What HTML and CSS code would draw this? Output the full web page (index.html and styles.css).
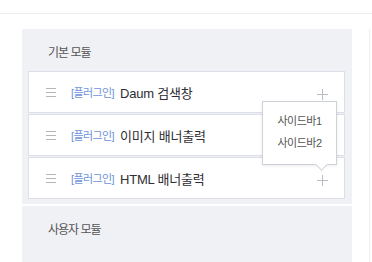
FILE: index.html
```html
<!DOCTYPE html>
<html>
  <head>
    <meta charset="utf-8">
    <title>사이드바 모듈</title>
    <link rel="stylesheet" href="styles.css">
  </head>
  <body>
    <header class="topbar"></header>
    <div class="layout">
      <section class="modules">
        <div class="group">
          <h2 class="group-title">기본 모듈</h2>
          <ul class="module-list">
            <li class="module">
              <svg class="handle" width="10" height="9" viewBox="0 0 10 9"><path d="M0 .5h10M0 4.5h10M0 8.5h10" stroke="#b4b6bb" stroke-width="1"/></svg>
              <span class="tag">[플러그인]</span>
              <span class="name">Daum 검색창</span>
              <svg class="add" width="11" height="11" viewBox="0 0 11 11"><path d="M5.5 0v11M0 5.5h11" stroke="#b9bcc2" stroke-width="1"/></svg>
            </li>
            <li class="module">
              <svg class="handle" width="10" height="9" viewBox="0 0 10 9"><path d="M0 .5h10M0 4.5h10M0 8.5h10" stroke="#b4b6bb" stroke-width="1"/></svg>
              <span class="tag">[플러그인]</span>
              <span class="name">이미지 배너출력</span>
              <svg class="add" width="11" height="11" viewBox="0 0 11 11"><path d="M5.5 0v11M0 5.5h11" stroke="#b9bcc2" stroke-width="1"/></svg>
            </li>
            <li class="module">
              <svg class="handle" width="10" height="9" viewBox="0 0 10 9"><path d="M0 .5h10M0 4.5h10M0 8.5h10" stroke="#b4b6bb" stroke-width="1"/></svg>
              <span class="tag">[플러그인]</span>
              <span class="name">HTML 배너출력</span>
              <svg class="add" width="11" height="11" viewBox="0 0 11 11"><path d="M5.5 0v11M0 5.5h11" stroke="#b9bcc2" stroke-width="1"/></svg>
              <ul class="popup">
                <li>사이드바1</li>
                <li>사이드바2</li>
              </ul>
            </li>
          </ul>
        </div>
        <div class="group group-user">
          <h2 class="group-title">사용자 모듈</h2>
        </div>
      </section>
      <aside class="side"></aside>
    </div>
  </body>
</html>
```
FILE: styles.css
```css
html, body {
  margin: 0;
  padding: 0;
  font: normal 12px "Liberation Sans", "Noto Sans CJK KR", sans-serif;
  color: #333333;
  background: #ffffff;
}

.topbar {
  height: 13px;
  border-bottom: 1px solid #ededed;
}

.layout {
  display: flex;
  padding: 15px 0 0 22px;
}

.modules {
  width: 330px;
  display: flex;
  flex-direction: column;
  gap: 2px;
}

.group {
  background: #f0f1f5;
  padding: 0 7px 5px 6px;
}

.group-title {
  margin: 0;
  padding: 15px 0 9px 20px;
  font-size: 12px;
  line-height: 18px;
  font-weight: normal;
  letter-spacing: -1px;
  color: #555555;
}

.group-user {
  height: 51px;
}

.module-list {
  list-style: none;
  margin: 0;
  padding: 0;
  display: flex;
  flex-direction: column;
  gap: 1px;
}

.module {
  position: relative;
  display: flex;
  align-items: center;
  height: 42px;
  padding: 0 16px 0 17px;
  background: #ffffff;
  border: 1px solid #dcdfe7;
  box-sizing: border-box;
}

.handle {
  margin-right: 15px;
}

.tag {
  font-size: 11px;
  letter-spacing: -0.6px;
  color: #6d93d8;
  margin-right: 6px;
}

.name {
  font-size: 13px;
  letter-spacing: -0.2px;
  color: #2e2e33;
}

.add {
  margin-left: auto;
  margin-top: 4px;
}

.popup {
  position: absolute;
  right: 7px;
  bottom: 33px;
  width: 75px;
  margin: 0;
  padding: 8px 0 10px;
  list-style: none;
  background: #ffffff;
  border: 1px solid #cdd1d9;
  box-shadow: 0 1px 3px rgba(0, 0, 0, .08);
  box-sizing: border-box;
  text-align: center;
}

.popup li {
  font-size: 11px;
  line-height: 22px;
  letter-spacing: -0.5px;
  color: #555555;
}

.popup::after {
  content: "";
  position: absolute;
  right: 10px;
  bottom: -5px;
  width: 8px;
  height: 8px;
  background: #ffffff;
  border-right: 1px solid #cdd1d9;
  border-bottom: 1px solid #cdd1d9;
  transform: rotate(45deg);
}

.side {
  flex: 1;
  margin-left: 17px;
  border-left: 1px solid #eceef2;
  height: 233px;
}
```
